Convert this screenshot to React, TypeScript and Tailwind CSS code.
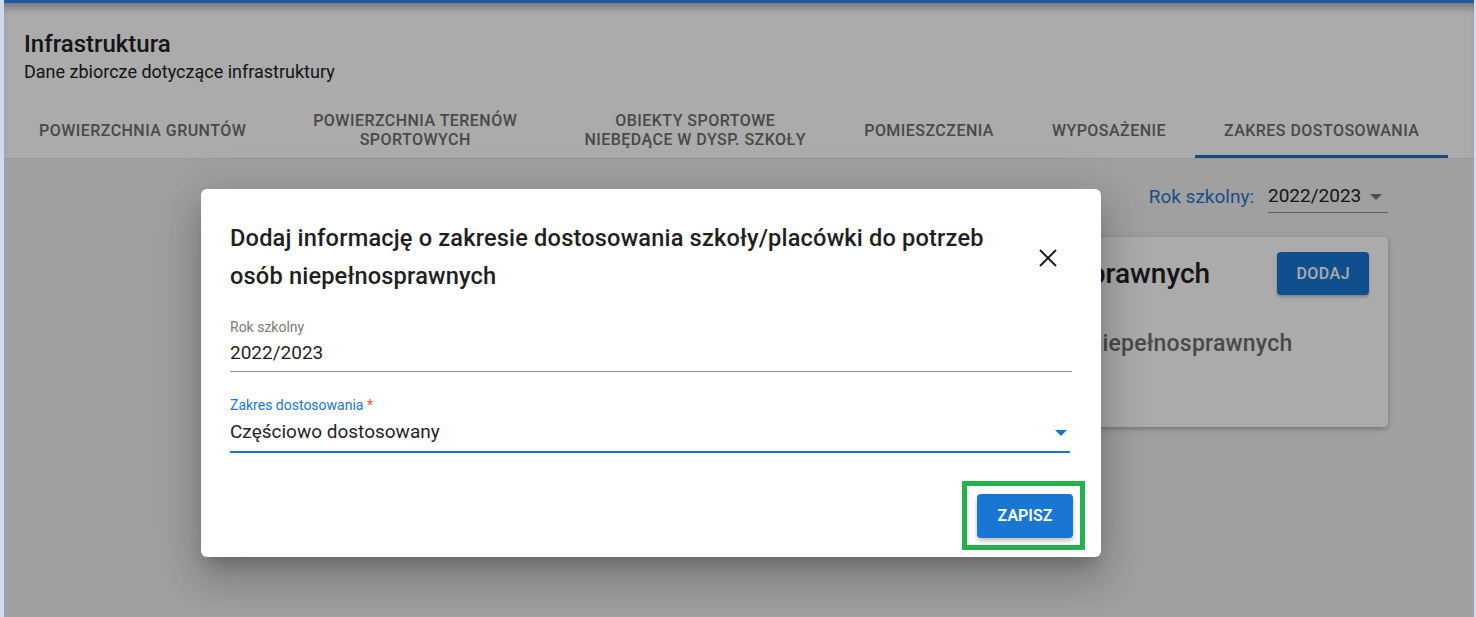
import React from "react";

const tabs = [
  { label: "Powierzchnia gruntów", wide: false },
  { label: "Powierzchnia terenów sportowych", wide: true },
  { label: "Obiekty sportowe niebędące w dysp. szkoły", wide: true },
  { label: "Pomieszczenia", wide: false },
  { label: "Wyposażenie", wide: false },
  { label: "Zakres dostosowania", wide: false, active: true },
];

function CaretDown({ className }: { className?: string }) {
  return (
    <svg width="12" height="6" viewBox="0 0 12 6" className={className}>
      <path d="M0 0l6 6 6-6z" fill="currentColor" />
    </svg>
  );
}

function CloseIcon() {
  return (
    <svg width="18" height="18" viewBox="0 0 18 18" className="text-[#1f1f1f]">
      <path d="M1 1l16 16M17 1L1 17" stroke="currentColor" strokeWidth="2" fill="none" />
    </svg>
  );
}

export default function App() {
  return (
    <div className="h-[617px] bg-[#cfdbee] pl-[4px] pr-[2px] font-['Roboto',sans-serif]">
      <div className="relative flex h-full flex-col overflow-hidden border-t-[3px] border-[#1c58a4] bg-[#efefef]">
        {/* Header */}
        <div className="bg-white shadow-[inset_0_10px_10px_-6px_rgba(0,0,0,0.35)]">
          <div className="px-[20px] pt-[25px]">
            <h1 className="text-[24px] leading-[32px] font-medium text-[#212121]">Infrastruktura</h1>
            <p className="text-[18px] leading-[24px] text-[#212121]">Dane zbiorcze dotyczące infrastruktury</p>
          </div>
          <div className="mt-[18px] flex border-b border-[#e0e0e0] pl-[6px]">
            {tabs.map((t) => (
              <div
                key={t.label}
                className={`relative flex h-[56px] items-center justify-center px-[29px] text-center text-[16px] leading-[19px] font-medium tracking-[0.46px] uppercase text-[#6e6e6e] ${t.wide ? "w-[280px]" : ""}`}
              >
                {t.label}
                {t.active && <div className="absolute right-0 bottom-0 left-0 h-[3px] bg-[#1f6fc5]" />}
              </div>
            ))}
          </div>
        </div>

        {/* Content */}
        <div className="flex flex-1 flex-col items-end px-[86px] pt-[22px]">
          <div className="flex h-[32px] items-center gap-[14px]">
            <span className="text-[19px] text-[#2a74c8]">Rok szkolny:</span>
            <div className="flex h-[32px] w-[120px] items-center justify-between border-b border-[#8c8c8c] pr-[6px]">
              <span className="text-[19px] text-[#212121]">2022/2023</span>
              <CaretDown className="text-[#757575]" />
            </div>
          </div>

          <div className="mt-[24px] h-[190px] w-[925px] rounded-[4px] bg-white pt-[15px] pr-[19px] pl-[20px] shadow-[0_2px_4px_rgba(0,0,0,0.2),0_1px_10px_rgba(0,0,0,0.1)]">
            <div className="flex items-center justify-between">
              <h2 className="whitespace-nowrap text-[28px] leading-[36px] font-medium text-[#212121]">
                Zakres dostosowania do potrzeb osób niepełnosprawnych
              </h2>
              <button className="h-[43px] rounded-[4px] bg-[#1976d2] px-[19px] text-[16px] font-medium tracking-[0.46px] text-white shadow-[0_2px_3px_rgba(0,0,0,0.25)]">
                DODAJ
              </button>
            </div>
            <p className="mt-[35px] whitespace-nowrap text-[23px] leading-[28px] font-medium tracking-[0.21px] text-[#6e6e6e]">
              Brak informacji o zakresie dostosowania do potrzeb osób niepełnosprawnych
            </p>
          </div>
        </div>

        {/* Modal */}
        <div className="absolute inset-0 bg-black/[0.33] pt-[186px] pl-[197px]">
          <div className="w-[900px] rounded-[6px] bg-white px-[29px] pt-[30px] pb-[7px] shadow-[0_11px_15px_-7px_rgba(0,0,0,0.2),0_24px_38px_3px_rgba(0,0,0,0.14),0_9px_46px_8px_rgba(0,0,0,0.12)]">
            <div className="flex items-start justify-between">
              <h3 className="w-[780px] text-[23.6px] leading-[38px] font-medium tracking-[0.17px] text-[#1f1f1f]">
                Dodaj informację o zakresie dostosowania szkoły/placówki do potrzeb osób niepełnosprawnych
              </h3>
              <button className="mt-[30px] mr-[15px]">
                <CloseIcon />
              </button>
            </div>

            <div className="mt-[24px]">
              <div className="text-[14px] leading-[17px] text-[#7a7a7a]">Rok szkolny</div>
              <div className="flex h-[36px] items-center border-b border-[#8c8c8c] text-[19px] text-[#1f1f1f]">
                2022/2023
              </div>
            </div>

            <div className="mt-[25px]">
              <div className="text-[14px] leading-[17px] text-[#1976d2]">
                Zakres dostosowania <span className="text-[#ef5a3c]">*</span>
              </div>
              <div className="flex h-[37px] items-center justify-between pr-[5px] text-[19px] text-[#1f1f1f]">
                <span>Częściowo dostosowany</span>
                <CaretDown className="text-[#1976d2]" />
              </div>
              <div className="mr-[2px] h-[2px] bg-[#1976d2]" />
            </div>

            <div className="mt-[28px] flex justify-end">
              <div className="-mr-[13px] border-[5px] border-[#22b14c] pt-[8px] pr-[7px] pb-[7px] pl-[10px]">
                <button className="h-[44px] w-[96px] rounded-[4px] bg-[#1976d2] text-[16px] font-semibold text-white shadow-[0_3px_5px_rgba(0,0,0,0.25)]">
                  ZAPISZ
                </button>
              </div>
            </div>
          </div>
        </div>
      </div>
    </div>
  );
}
